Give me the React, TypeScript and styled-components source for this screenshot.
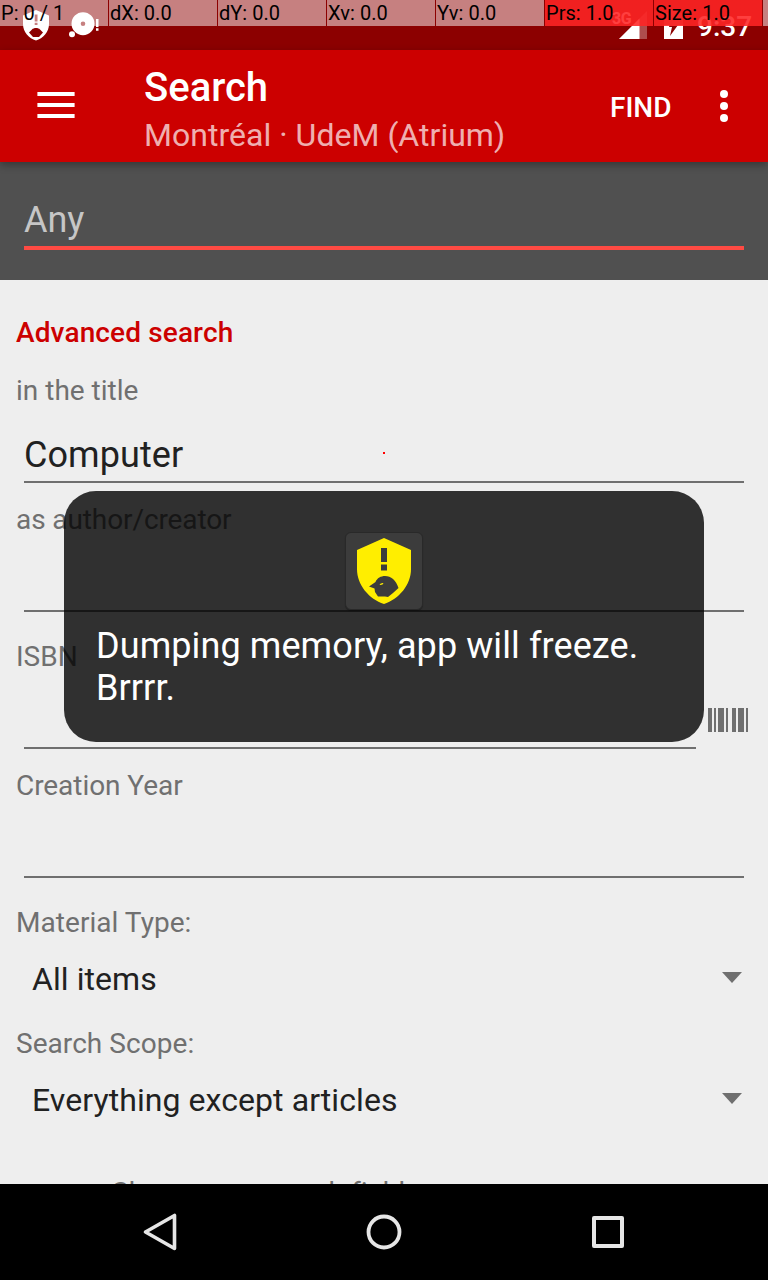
import React from "react";
import styled, { createGlobalStyle } from "styled-components";

const Global = createGlobalStyle`
  html, body { margin: 0; padding: 0; background: #000; }
  * { box-sizing: border-box; }
`;

const Screen = styled.div`
  position: relative;
  width: 768px;
  height: 1280px;
  overflow: hidden;
  display: flex;
  flex-direction: column;
  background: #eee;
  font-family: Roboto, sans-serif;
  color: #212121;
`;

const StatusBar = styled.div`
  height: 50px;
  flex: none;
  display: flex;
  justify-content: space-between;
  background: #8c0000;
`;

const StatusGroup = styled.div`
  display: flex;
  height: 50px;
`;

const Clock = styled.div`
  width: 71px;
  padding-top: 10px;
  font-size: 28px;
  line-height: 33px;
  font-weight: 500;
  color: #fff;
`;

const NetworkLabel = styled.span`
  width: 7px;
  padding-top: 9px;
  font-size: 16px;
  line-height: 19px;
  font-weight: 700;
  letter-spacing: -0.5px;
  color: #fff;
`;

const PointerBar = styled.div`
  position: absolute;
  top: 0;
  left: 0;
  width: 768px;
  height: 26px;
  display: flex;
  gap: 1px;
`;

const PointerCell = styled.div<{ $active?: boolean }>`
  flex: none;
  width: 108px;
  height: 26px;
  padding-left: 1px;
  font-size: 20px;
  line-height: 26px;
  letter-spacing: 0.04px;
  white-space: pre;
  color: #000;
  background: ${(p) =>
    p.$active
      ? "linear-gradient(rgba(255,0,0,.753), rgba(255,0,0,.753)), rgba(255,255,255,.5)"
      : "rgba(255,255,255,.5)"};
`;

const Toolbar = styled.header`
  position: relative;
  z-index: 1;
  height: 112px;
  flex: none;
  display: flex;
  align-items: center;
  padding: 0 36px 0 37px;
  background: #cc0000;
  box-shadow: 0 3px 8px rgba(0, 0, 0, 0.32);
`;

const Titles = styled.div`
  flex: 1;
  margin-left: 69px;
`;

const Title = styled.h1`
  margin: 4px 0 0;
  font-size: 40px;
  line-height: 47px;
  font-weight: 500;
  color: #fff;
`;

const Subtitle = styled.div`
  font-size: 32px;
  line-height: 38px;
  margin-top: 5px;
  margin-bottom: -2px;
  letter-spacing: 0.03px;
  color: rgba(255, 255, 255, 0.7);
`;

const FindButton = styled.button`
  border: 0;
  padding: 2px 0 0;
  margin-right: 44.5px;
  background: none;
  font: 500 28px/33px Roboto, sans-serif;
  color: #fff;
`;

const SearchPanel = styled.div`
  height: 118px;
  flex: none;
  padding: 37px 24px 0;
  background: #505050;
`;

const SearchInput = styled.div`
  height: 51px;
  border-bottom: 4px solid #ff4a43;
  font-size: 36px;
  line-height: 42px;
  color: #c6c6c6;
`;

const Form = styled.main`
  flex: 1;
  min-height: 0;
  overflow: hidden;
  padding-top: 36px;
`;

const Heading = styled.h2`
  margin: 0 0 25px 16px;
  font-size: 28px;
  line-height: 33px;
  font-weight: 500;
  letter-spacing: 0.13px;
  color: #cc0000;
`;

const Field = styled.div<{ $height: number }>`
  height: ${(p) => p.$height}px;
`;

const Label = styled.div<{ $tracking?: number }>`
  padding-left: 16px;
  font-size: 28px;
  line-height: 33px;
  letter-spacing: ${(p) => p.$tracking ?? 0}px;
  color: #707070;
`;

const InputRow = styled.div`
  display: flex;
  align-items: flex-start;
  height: 76px;
  padding: 0 20px 0 24px;
`;

const Input = styled.div`
  flex: 1;
  height: 76px;
  margin-right: 4px;
  padding-top: 27px;
  border-bottom: 2px solid #6f6f6f;
  font-size: 36px;
  line-height: 42px;
  letter-spacing: 0.08px;
`;

const ScanButton = styled.div`
  width: 40px;
  height: 24px;
  margin: 35px 0 0 8px;
  display: flex;
`;

const Select = styled.div`
  display: flex;
  justify-content: space-between;
  padding: 21px 26px 0 32px;
  font-size: 32px;
  line-height: 38px;
  letter-spacing: 0.07px;
`;

const Caret = styled.svg`
  width: 20px;
  height: 11px;
  margin-top: 12px;
`;

const MoreFields = styled.div`
  margin: 28px 0 0 112px;
  font-size: 28px;
  line-height: 33px;
  letter-spacing: 0.04px;
  color: #707070;
`;

const NavBar = styled.nav`
  height: 96px;
  flex: none;
  display: flex;
  justify-content: space-between;
  align-items: center;
  padding: 0 136px;
  background: #000;
`;

const Toast = styled.div`
  position: absolute;
  z-index: 2;
  top: 491px;
  left: 64px;
  width: 640px;
  height: 251px;
  padding: 41px 32px 0;
  border-radius: 32px;
  background: rgba(0, 0, 0, 0.8);
  display: flex;
  flex-direction: column;
  align-items: center;
`;

const ToastIcon = styled.div`
  width: 78px;
  height: 78px;
  border-radius: 6px;
  border: 1px solid #292929;
  background: #3c3c3c;
  box-shadow: 0 1px 1px rgba(0, 0, 0, 0.3);
`;

const ToastText = styled.div`
  align-self: stretch;
  margin-top: 15px;
  font-size: 36px;
  line-height: 42px;
  letter-spacing: 0.09px;
  white-space: nowrap;
  color: #fff;
`;

const TouchPoint = styled.div`
  position: absolute;
  top: 452px;
  left: 383px;
  width: 2px;
  height: 2px;
  background: #f00;
`;

const pointerCells = [
  { text: "P: 0 / 1" },
  { text: "dX: 0.0" },
  { text: "dY: 0.0" },
  { text: "Xv: 0.0" },
  { text: "Yv: 0.0" },
  { text: "Prs: 1.0", active: true },
  { text: "Size: 1.0", active: true },
  { text: "" },
];

const bars = [
  [0, 4],
  [6, 2],
  [10, 6],
  [18, 2],
  [24, 4],
  [30, 6],
  [38, 2],
];

const shieldPath =
  "M27 0 L54 12 V31 C54 47 42 61 27 66 C12 61 0 47 0 31 V12 Z " +
  "M24 10 H30 V24 H24 Z M24 26.5 H30 V32.5 H24 Z " +
  "M12 48.5 L18.5 44 C20 40 24 38 28 38 C34 38 39 42 41.5 50 L36 55 L31 59 L28 58.5 H21 L18 54 L17.5 50.5 Z";

function Shield({ width, height, color }: { width: number; height: number; color: string }) {
  return (
    <svg width={width} height={height} viewBox="0 0 54 66" preserveAspectRatio="none">
      <path d={shieldPath} fill={color} fillRule="evenodd" />
      <path d="M22.5 46.5 Q24 44.5 26.5 45 Q26 47 23.5 47 Z" fill={color} />
    </svg>
  );
}

const ShieldSlot = styled.div<{ $x: number; $y: number }>`
  display: flex;
  padding: ${(p) => p.$y}px 0 0 ${(p) => p.$x}px;
`;

function Dropdown({ label, value }: { label: string; value: string }) {
  return (
    <Field $height={121}>
      <Label $tracking={0.05}>{label}</Label>
      <Select>
        {value}
        <Caret viewBox="0 0 20 11">
          <path d="M0 0H20L10 11Z" fill="#6f6f6f" />
        </Caret>
      </Select>
    </Field>
  );
}

function TextField({
  label,
  value,
  height,
  tracking,
  scan,
}: {
  label: string;
  value?: string;
  height: number;
  tracking?: number;
  scan?: boolean;
}) {
  return (
    <Field $height={height}>
      <Label $tracking={tracking}>{label}</Label>
      <InputRow>
        <Input>{value}</Input>
        {scan && (
          <ScanButton>
            <svg width="40" height="24">
              {bars.map(([x, w]) => (
                <rect key={x} x={x} y="0" width={w} height="24" fill="#6f6f6f" />
              ))}
            </svg>
          </ScanButton>
        )}
      </InputRow>
    </Field>
  );
}

export default function App() {
  return (
    <Screen>
      <Global />
      <StatusBar>
        <StatusGroup>
          <ShieldSlot $x={23} $y={10}>
            <svg width="26" height="31" viewBox="0 0 26 31" fill="#fff">
              <path
                fillRule="evenodd"
                d="M13 0L26 5.5V14C26 22 20 28.5 13 30.5C6 28.5 0 22 0 14V5.5ZM11.7 4.5H14.5V11.5H11.7ZM11.7 12.7H14.5V15H11.7ZM6 22.5L9 19.5C10.5 17.5 15.5 17.5 17 19.5L20 22.5L16 27H10Z"
              />
            </svg>
          </ShieldSlot>
          <svg width="60" height="50" viewBox="49 0 60 50" fill="#fff">
            <path
              fillRule="evenodd"
              d="M83 12.2a11.5 11.5 0 1 0 0 23a11.5 11.5 0 1 0 0-23Z M83 21.4a2.3 2.3 0 1 1 0 4.6a2.3 2.3 0 1 1 0-4.6Z"
            />
            <circle cx="72" cy="34.3" r="3" />
            <path d="M96 19h2.5v8H96ZM96 28.3h2.5v2.5H96Z" />
          </svg>
        </StatusGroup>
        <StatusGroup>
          <NetworkLabel>3G</NetworkLabel>
          <svg width="78" height="50" viewBox="619 0 78 50">
            <path d="M619 39L647 11V39Z" fill="#fff" opacity=".3" />
            <path d="M619 39L639.5 18.5V39Z" fill="#fff" />
            <path d="M664 13H669V10H678V13H683V26H664Z" fill="#fff" opacity=".3" />
            <path
              fillRule="evenodd"
              d="M664 25H669.5L669 27H672L670 36L678 25H683V39H664Z"
              fill="#fff"
            />
          </svg>
          <Clock>9:37</Clock>
        </StatusGroup>
        <PointerBar>
          {pointerCells.map((c, i) => (
            <PointerCell key={i} $active={c.active}>
              {c.text}
            </PointerCell>
          ))}
        </PointerBar>
      </StatusBar>

      <Toolbar>
        <svg width="38" height="28" fill="#fff">
          <path d="M.4 0h37.2v4H.4ZM.4 11h37.2v4H.4ZM.4 22h37.2v4H.4Z" />
        </svg>
        <Titles>
          <Title>Search</Title>
          <Subtitle>Montréal · UdeM (Atrium)</Subtitle>
        </Titles>
        <FindButton>FIND</FindButton>
        <svg width="16" height="32" fill="#fff">
          <circle cx="8" cy="4" r="4" />
          <circle cx="8" cy="16" r="4" />
          <circle cx="8" cy="28" r="4" />
        </svg>
      </Toolbar>

      <SearchPanel>
        <SearchInput>Any</SearchInput>
      </SearchPanel>

      <Form>
        <Heading>Advanced search</Heading>
        <TextField label="in the title" value="Computer" height={129} />
        <TextField label="as author/creator" height={137} tracking={-0.1} />
        <TextField label="ISBN" height={129} scan />
        <TextField label="Creation Year" height={137} tracking={-0.06} />
        <Dropdown label="Material Type:" value="All items" />
        <Dropdown label="Search Scope:" value="Everything except articles" />
        <MoreFields>Show more search fields</MoreFields>
      </Form>

      <NavBar>
        <svg width="48" height="48" viewBox="136 1208 48 48">
          <path
            d="M174.5 1215.5V1248.5L145.5 1232Z"
            fill="none"
            stroke="#e6e6e6"
            strokeWidth="3.6"
            strokeLinejoin="round"
          />
        </svg>
        <svg width="48" height="48">
          <circle cx="24" cy="24" r="15.5" fill="none" stroke="#e6e6e6" strokeWidth="3.8" />
        </svg>
        <svg width="48" height="48">
          <rect
            x="10"
            y="10"
            width="28"
            height="28"
            fill="none"
            stroke="#e6e6e6"
            strokeWidth="4"
            strokeLinejoin="round"
          />
        </svg>
      </NavBar>

      <TouchPoint />
      <Toast>
        <ToastIcon>
          <ShieldSlot $x={11} $y={5}>
            <Shield width={54} height={66} color="#fe0" />
          </ShieldSlot>
        </ToastIcon>
        <ToastText>
          Dumping memory, app will freeze.
          <br />
          Brrrr.
        </ToastText>
      </Toast>
    </Screen>
  );
}
